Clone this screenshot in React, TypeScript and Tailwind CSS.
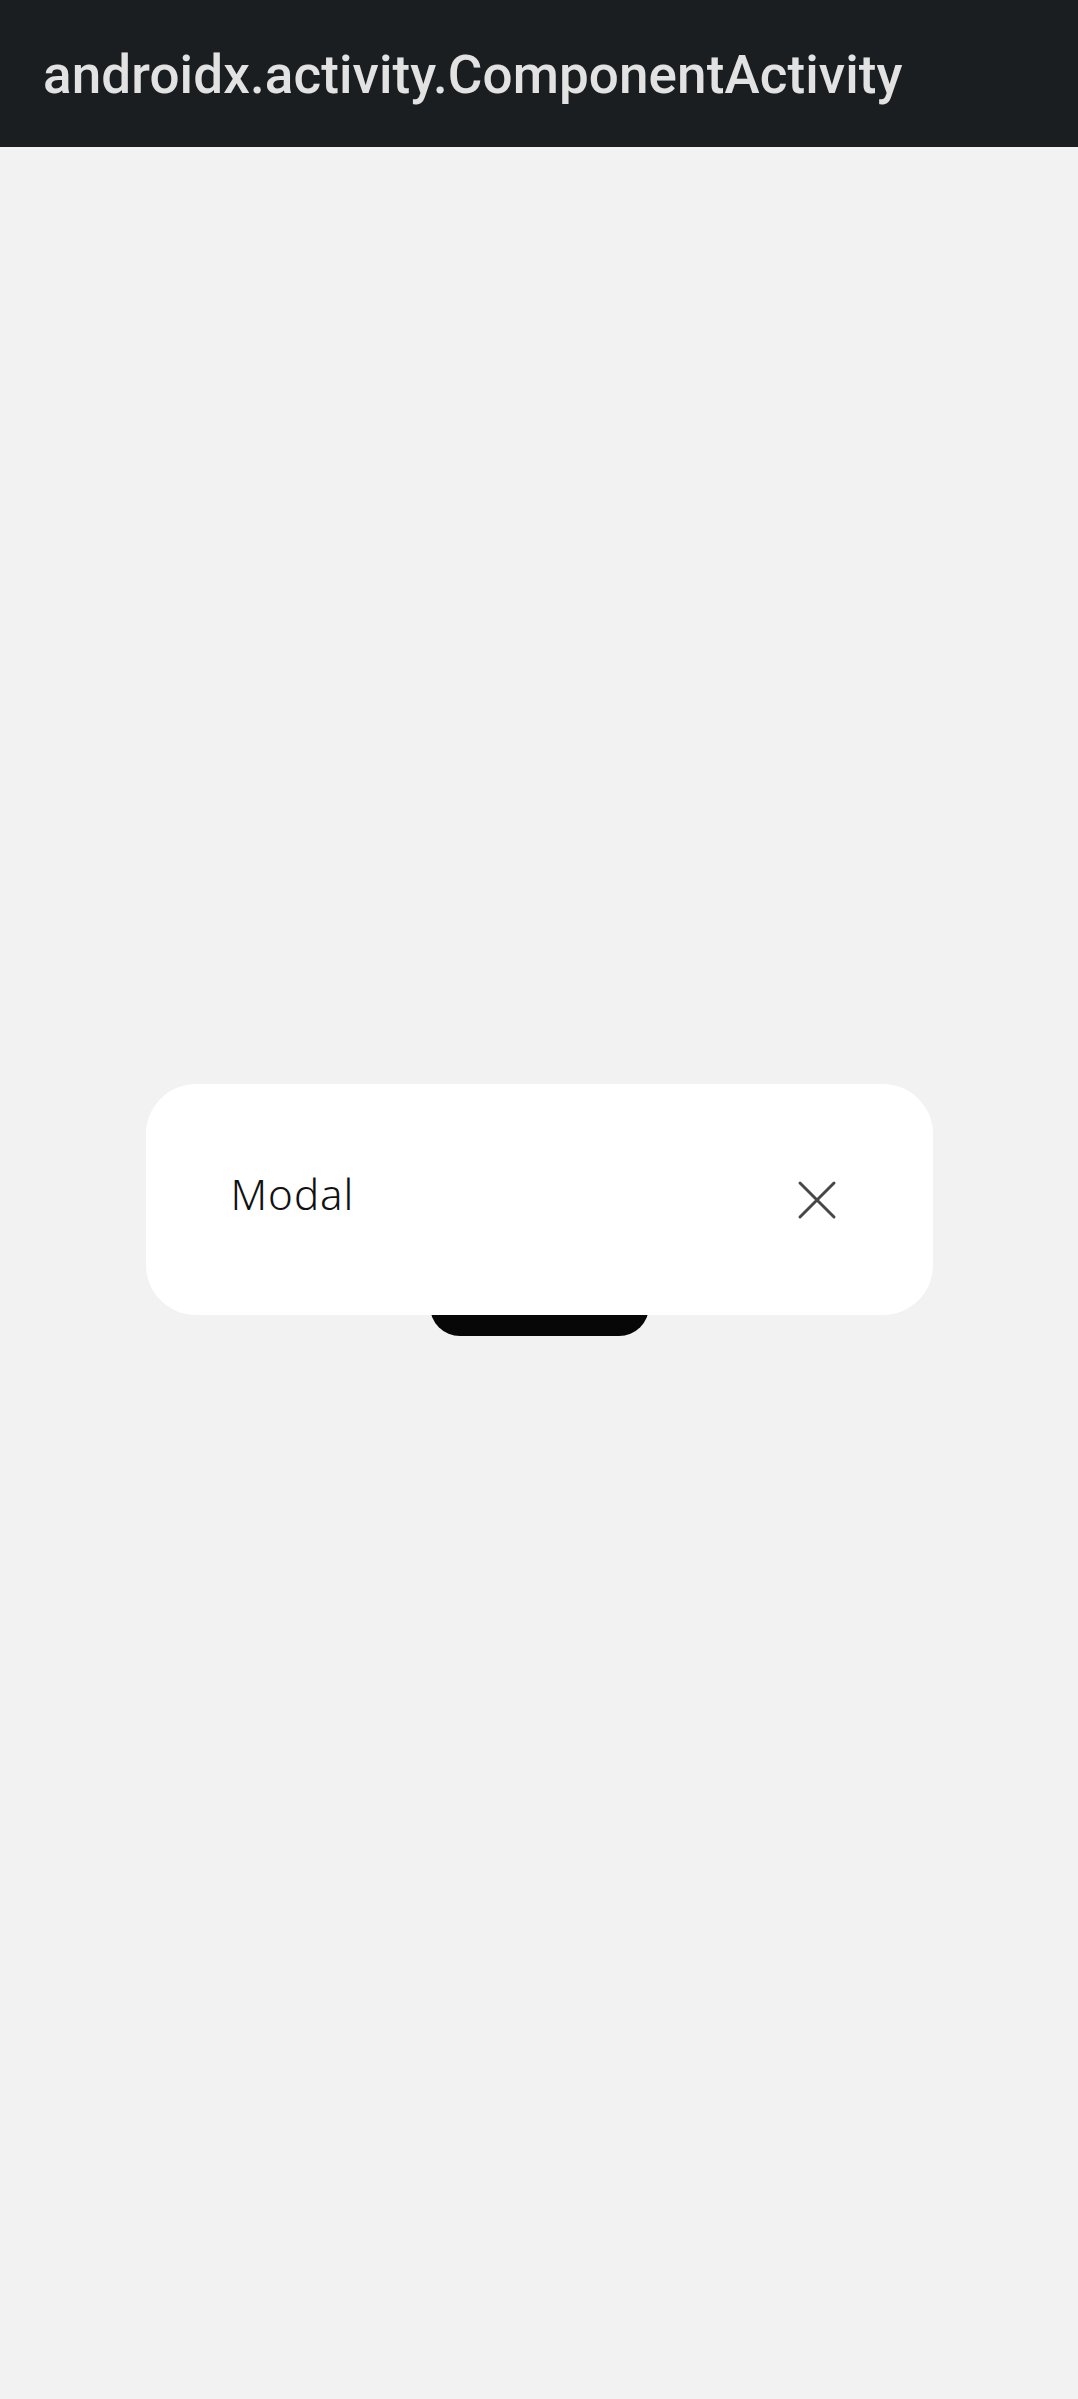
import React from "react";

function CloseIcon() {
  return (
    <svg className="w-[60px] h-[60px]" viewBox="0 0 24 24" fill="none" stroke="#474747" strokeWidth={1.2} strokeLinecap="round">
      <path d="M5.2 5.2L18.8 18.8M18.8 5.2L5.2 18.8" />
    </svg>
  );
}

export default function App() {
  return (
    <div className="min-h-[2399px] flex flex-col bg-[#f2f2f2]">
      <div className="h-[147px] bg-[#1b1e21] flex items-center px-[43px]">
        <h1
          className="text-[53px] font-medium leading-none text-[#e2e2e2] pt-[4px] tracking-[0.1px]"
          style={{ fontFamily: "Roboto, 'Liberation Sans', sans-serif" }}
        >
          androidx.activity.ComponentActivity
        </h1>
      </div>

      <div className="flex-1 flex items-center justify-center">
        <button className="w-[219px] h-[126px] rounded-[30px] bg-[#070707]" />
      </div>

      <div className="fixed inset-0 flex items-center justify-center">
        <div className="w-[787px] h-[231px] rounded-[50px] bg-white pl-[86px] pr-[86px] flex items-center justify-between">
          <span
            className="text-[42px] font-light leading-none tracking-[1px] text-[#111111] mb-[12px] -ml-[1px]"
            style={{ fontFamily: "'Noto Sans', 'Liberation Sans', sans-serif" }}
          >
            Modal
          </span>
          <button className="w-[60px] h-[60px] flex items-center justify-center">
            <CloseIcon />
          </button>
        </div>
      </div>
    </div>
  );
}
